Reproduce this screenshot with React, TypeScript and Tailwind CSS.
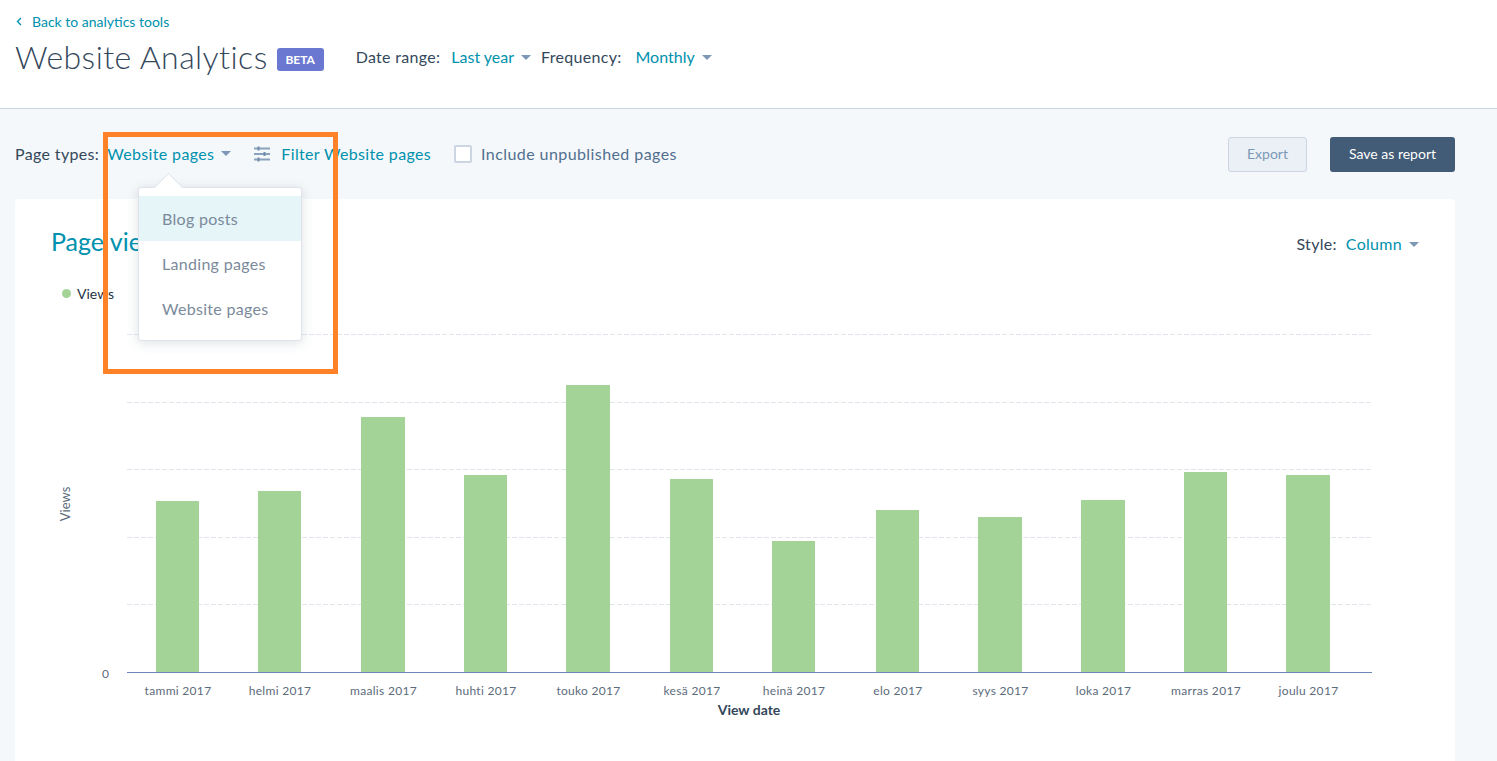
const bars = [
  { x: 156, w: 43, top: 501, label: "tammi 2017" },
  { x: 258, w: 43, top: 491, label: "helmi 2017" },
  { x: 361, w: 44, top: 417, label: "maalis 2017" },
  { x: 464, w: 43, top: 475, label: "huhti 2017" },
  { x: 566, w: 44, top: 385, label: "touko 2017" },
  { x: 670, w: 43, top: 479, label: "kesä 2017" },
  { x: 772, w: 43, top: 541, label: "heinä 2017" },
  { x: 876, w: 43, top: 510, label: "elo 2017" },
  { x: 978, w: 44, top: 517, label: "syys 2017" },
  { x: 1081, w: 44, top: 500, label: "loka 2017" },
  { x: 1184, w: 43, top: 472, label: "marras 2017" },
  { x: 1286, w: 44, top: 475, label: "joulu 2017" },
];

const gridLines = [334, 402, 469, 537, 604];

function Caret() {
  return (
    <svg width="10" height="5" viewBox="0 0 10 5" className="ml-[7px] shrink-0">
      <path d="M0 0h10L5 5z" fill="#7c98b6" />
    </svg>
  );
}

function BackChevron() {
  return (
    <svg width="6" height="9" viewBox="0 0 6 9" fill="none" stroke="#0091ae" strokeWidth="1.4" className="ml-[1px]">
      <path d="M5 1 1.5 4.5 5 8" />
    </svg>
  );
}

function FilterIcon() {
  return (
    <svg width="16" height="16" viewBox="0 0 16 16" fill="none" stroke="#8aa2bc" strokeWidth="2" className="block">
      <path d="M0 2.5h16M0 8h16M0 13.5h16" />
      <path d="M4.5 0.5v4M10.5 6v4M4.5 11.5v4" stroke="#6f8bab" strokeWidth="2" />
    </svg>
  );
}

function Chart() {
  return (
    <svg width="1440" height="441" viewBox="15 320 1440 441" className="block" fontFamily="Lato, sans-serif">
      {gridLines.map((y) => (
        <line key={y} x1="127" x2="1372" y1={y + 0.5} y2={y + 0.5} stroke="#e2e5ee" strokeDasharray="5 2" />
      ))}
      {bars.map((b) => (
        <g key={b.label}>
          <rect x={b.x} y={b.top} width={b.w} height={672 - b.top} fill="#a4d398" />
          <text x={b.x + b.w / 2 + 0.5} y="695" textAnchor="middle" fontSize="12" letterSpacing="0.3" fill="#5c6b7c">
            {b.label}
          </text>
        </g>
      ))}
      <line x1="127" x2="1372" y1="672.5" y2="672.5" stroke="#6a8ab5" />
      <text x="102" y="678" fontSize="12" fill="#5c6b7c">0</text>
      <text x="749" y="715" textAnchor="middle" fontSize="14" fontWeight="700" fill="#33475b">View date</text>
      <text x="0" y="0" transform="translate(70 504) rotate(-90)" textAnchor="middle" fontSize="13" fill="#5c6b7c">Views</text>
    </svg>
  );
}

export default function App() {
  return (
    <div className="relative h-[761px] overflow-hidden bg-[#f5f8fa] font-['Lato',sans-serif] text-[#33475b]">
      {/* Header */}
      <header className="h-[109px] border-b border-[#cbd6e2] bg-white pl-[15px] pt-[12px]">
        <a className="flex h-[18px] items-center gap-[10px] text-[14px] text-[#0091ae]">
          <BackChevron />
          Back to analytics tools
        </a>
        <div className="mt-[5px] flex items-center">
          <h1 className="text-[32px] leading-[44px] font-light tracking-[0.45px]">Website Analytics</h1>
          <span className="ml-[9px] mt-[5px] flex h-[23px] w-[47px] items-center justify-center rounded-[3px] bg-[#6a78d1] text-[12px] font-bold text-white">
            BETA
          </span>
          <div className="ml-[32px] flex items-center text-[16px] tracking-[0.3px]">
            <span>Date range:</span>
            <span className="ml-[11px] tracking-normal text-[#0091ae]">Last year</span>
            <Caret />
            <span className="ml-[10px]">Frequency:</span>
            <span className="ml-[14px] tracking-normal text-[#0091ae]">Monthly</span>
            <Caret />
          </div>
        </div>
      </header>

      {/* Toolbar */}
      <div className="flex h-[90px] items-start pl-[15px] pr-[42px] pt-[28px]">
        <div className="flex h-[33px] items-center text-[16px] tracking-[0.35px]">
          <span>Page types:</span>
          <span className="ml-[8px] text-[#0091ae]">Website pages</span>
          <Caret />
          <span className="ml-[23px]">
            <FilterIcon />
          </span>
          <span className="ml-[11px] text-[#0091ae]">Filter Website pages</span>
          <span className="ml-[23px] h-[18px] w-[18px] rounded-[2px] border-2 border-[#cbd6e2] bg-white" />
          <span className="ml-[9px] tracking-[0.42px] text-[#516f90]">Include unpublished pages</span>
        </div>
        <div className="ml-auto flex items-center gap-[23px] text-[14px]">
          <button className="h-[35px] w-[79px] rounded-[3px] border border-[#cbd6e2] bg-[#eaf0f6] pb-[2px] text-[#7c98b6]">Export</button>
          <button className="h-[35px] w-[125px] rounded-[3px] bg-[#425b76] pb-[2px] text-white">Save as report</button>
        </div>
      </div>

      {/* Card */}
      <section className="ml-[15px] h-[600px] w-[1440px] rounded-t-[4px] bg-white">
        <div className="flex items-center justify-between pl-[36px] pr-[36px] pt-[25px]">
          <h2 className="text-[25px] leading-[34px] text-[#0091ae]">Page views</h2>
          <div className="mt-[6px] flex items-center text-[16px] tracking-[0.3px]">
            <span>Style:</span>
            <span className="ml-[9px] text-[#0091ae]">Column</span>
            <Caret />
          </div>
        </div>
        <div className="mt-[25px] flex h-[20px] items-center pl-[47px] text-[14px] text-[#253342]">
          <span className="mr-[6px] h-[9px] w-[9px] rounded-full bg-[#a4d398]" />
          Views
        </div>
        <div className="mt-[17px]">
          <Chart />
        </div>
      </section>

      {/* Dropdown */}
      <div className="absolute left-[138px] top-[187px] h-[154px] w-[164px] rounded-[3px] border border-[#dfe3eb] bg-white pt-[8px] text-[16px] tracking-[0.3px] text-[#7b8a9b] shadow-[0_2px_12px_rgba(66,91,118,0.18)]">
        <span className="absolute -top-[11px] left-[19px] h-[21px] w-[21px] rotate-45 border-l border-t border-[#dfe3eb] bg-white" />
        <div className="relative flex h-[45px] items-center bg-[#e5f5f8] pl-[23px]">Blog posts</div>
        <div className="relative flex h-[45px] items-center pl-[23px]">Landing pages</div>
        <div className="relative flex h-[45px] items-center pl-[23px]">Website pages</div>
      </div>

      {/* Annotation frame */}
      <div className="pointer-events-none absolute left-[103px] top-[132px] h-[242px] w-[235px] border-[5px] border-[#ff8228]" />
    </div>
  );
}
